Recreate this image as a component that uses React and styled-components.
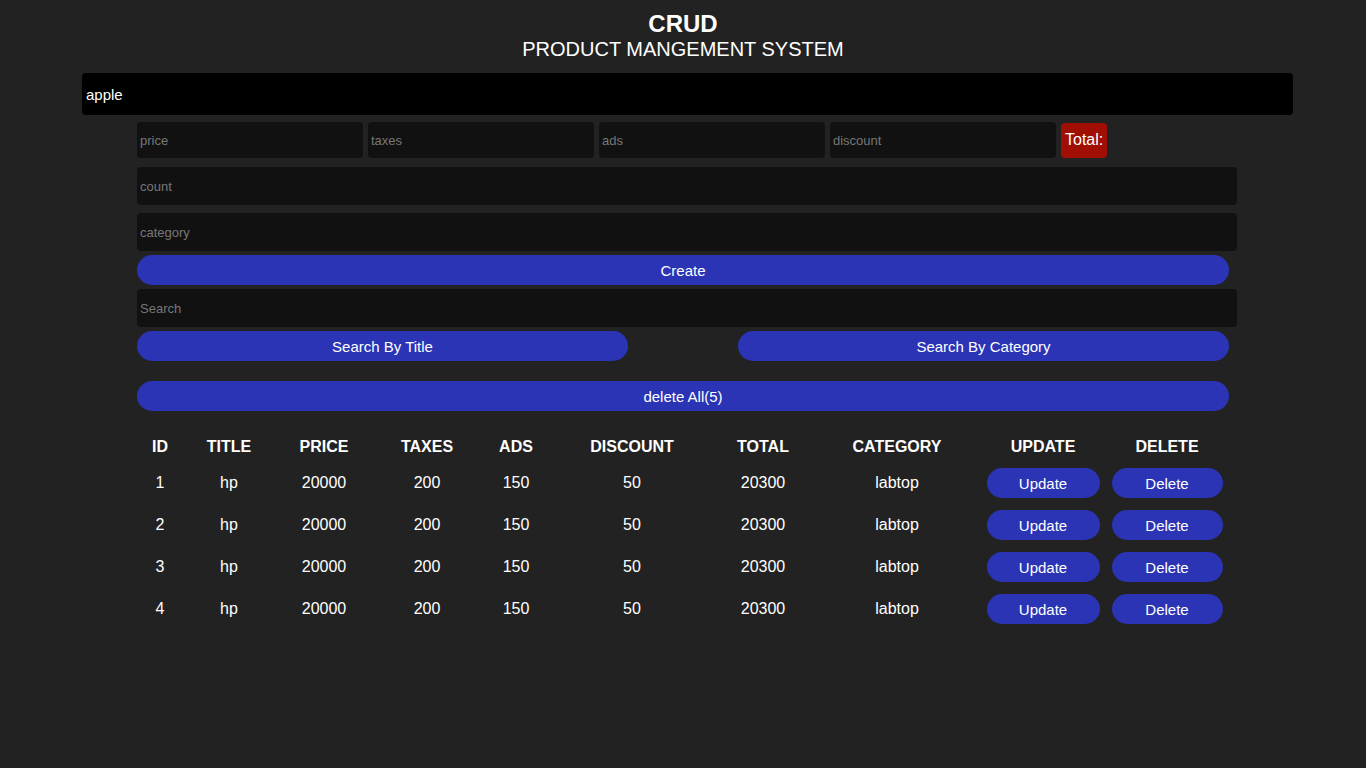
import React from "react";
import styled, { createGlobalStyle } from "styled-components";

const GlobalStyle = createGlobalStyle`
  body {
    margin: 0;
    background: #222222;
    color: #ffffff;
    font-family: "Liberation Sans", Arial, sans-serif;
  }
  * { box-sizing: border-box; }
`;

const blue = "#2a34b5";

const Page = styled.div`
  min-height: 768px;
  padding-top: 11px;
`;

const Head = styled.header`
  text-align: center;
`;

const Title = styled.h2`
  margin: 0;
  font-size: 24px;
  line-height: 26px;
  font-weight: bold;
`;

const Sub = styled.p`
  margin: 0;
  font-size: 20px;
  line-height: 24px;
`;

const TitleInput = styled.input`
  display: block;
  width: 1211px;
  height: 42px;
  margin: 12px 0 0 82px;
  padding: 0 4px;
  border: none;
  border-radius: 4px;
  background: #000;
  color: #fff;
  font: 15px "Liberation Sans", Arial, sans-serif;
  outline: none;
  caret-color: #aaa;
`;

const Inputs = styled.div`
  width: 1100px;
  margin: 7px 0 0 137px;
  display: flex;
  flex-direction: column;
`;

const PriceRow = styled.div`
  display: flex;
  align-items: center;
  gap: 5px;
  height: 36px;
`;

const Field = styled.input`
  width: ${(p) => p.w || "100%"};
  height: ${(p) => p.h || 38}px;
  margin-top: ${(p) => p.mt || 0}px;
  padding: 0 3px;
  border: none;
  border-radius: 4px;
  background: #111111;
  color: #fff;
  font: 13px "Liberation Sans", Arial, sans-serif;
  outline: none;
  &::placeholder { color: #777777; }
`;

const Total = styled.small`
  height: 35px;
  padding: 0 4px;
  display: flex;
  align-items: center;
  background: #a10f04;
  border-radius: 4px;
  font-size: 16px;
`;

const Btn = styled.button`
  width: ${(p) => p.w || "1092px"};
  height: 30px;
  margin-top: ${(p) => p.mt || 0}px;
  border: none;
  border-radius: 20px;
  background: ${blue};
  color: #fff;
  font: 15px "Liberation Sans", Arial, sans-serif;
  cursor: pointer;
`;

const SearchBtns = styled.div`
  display: flex;
  gap: 110px;
  margin-top: 4px;
`;

const Table = styled.table`
  width: 1092px;
  margin: 17px 0 0 137px;
  border-collapse: collapse;
  table-layout: fixed;
  text-align: center;
  font-size: 16px;
`;

const Th = styled.th`
  height: 34px;
  font-weight: bold;
  vertical-align: middle;
  padding: 3px 0 0;
`;

const Td = styled.td`
  height: 42px;
  padding: 0;
  vertical-align: middle;
`;

const RowBtn = styled.button`
  width: ${(p) => p.w}px;
  height: 30px;
  border: none;
  border-radius: 20px;
  background: ${blue};
  color: #fff;
  font: 15px "Liberation Sans", Arial, sans-serif;
  vertical-align: middle;
`;

const cols = [46, 92, 98, 108, 70, 162, 100, 168, 124, 124];
const heads = ["ID", "TITLE", "PRICE", "TAXES", "ADS", "DISCOUNT", "TOTAL", "CATEGORY", "UPDATE", "DELETE"];
const rows = [1, 2, 3, 4];

export default function App() {
  return (
    <Page>
      <GlobalStyle />
      <Head>
        <Title>CRUD</Title>
        <Sub>PRODUCT MANGEMENT SYSTEM</Sub>
      </Head>
      <TitleInput defaultValue="apple" autoFocus />
      <Inputs>
        <PriceRow>
          <Field w="226px" h={36} placeholder="price" />
          <Field w="226px" h={36} placeholder="taxes" />
          <Field w="226px" h={36} placeholder="ads" />
          <Field w="226px" h={36} placeholder="discount" />
          <Total>Total:</Total>
        </PriceRow>
        <Field mt={9} placeholder="count" />
        <Field mt={8} placeholder="category" />
        <Btn mt={4}>Create</Btn>
        <Field mt={4} placeholder="Search" />
        <SearchBtns>
          <Btn w="491px">Search By Title</Btn>
          <Btn w="491px">Search By Category</Btn>
        </SearchBtns>
        <Btn mt={20}>delete All(5)</Btn>
      </Inputs>
      <Table>
        <colgroup>
          {cols.map((w, i) => (
            <col key={i} style={{ width: w }} />
          ))}
        </colgroup>
        <thead>
          <tr>
            {heads.map((h) => (
              <Th key={h}>{h}</Th>
            ))}
          </tr>
        </thead>
        <tbody>
          {rows.map((id) => (
            <tr key={id}>
              <Td>{id}</Td>
              <Td>hp</Td>
              <Td>20000</Td>
              <Td>200</Td>
              <Td>150</Td>
              <Td>50</Td>
              <Td>20300</Td>
              <Td>labtop</Td>
              <Td><RowBtn w={113}>Update</RowBtn></Td>
              <Td><RowBtn w={111}>Delete</RowBtn></Td>
            </tr>
          ))}
        </tbody>
      </Table>
    </Page>
  );
}
